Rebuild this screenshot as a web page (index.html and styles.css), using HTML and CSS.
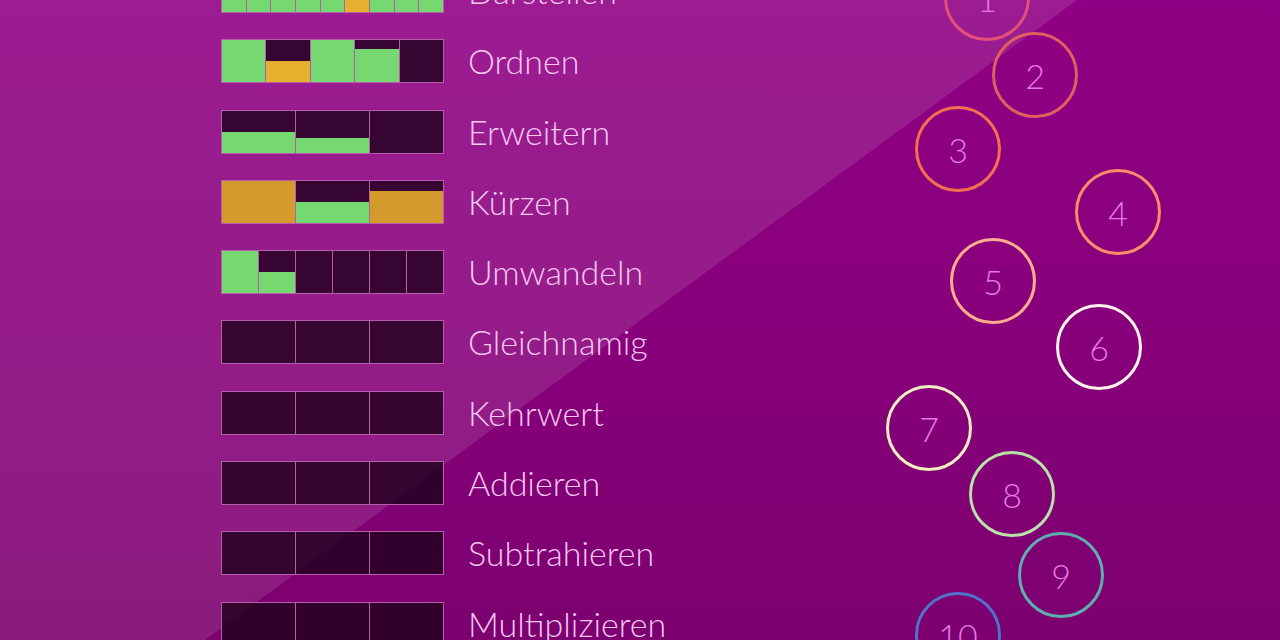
FILE: index.html
```html
<!DOCTYPE html>
<html lang="de">
<head>
  <meta charset="UTF-8" />
  <meta name="viewport" content="width=device-width, initial-scale=1.0"/>
  <title>Brüche</title>
  <link rel="stylesheet" href="styles.css">
</head>
<body>

  <main class="screen">

    <div class="glare"></div>

    <ul class="topics">
      <li class="topic">
        <div class="bar">
          <div class="seg"><div class="fill green" style="height:100%"></div></div>
          <div class="seg"><div class="fill green" style="height:100%"></div></div>
          <div class="seg"><div class="fill green" style="height:100%"></div></div>
          <div class="seg"><div class="fill green" style="height:100%"></div></div>
          <div class="seg"><div class="fill green" style="height:100%"></div></div>
          <div class="seg"><div class="fill gold" style="height:100%"></div></div>
          <div class="seg"><div class="fill green" style="height:100%"></div></div>
          <div class="seg"><div class="fill green" style="height:100%"></div></div>
          <div class="seg"><div class="fill green" style="height:100%"></div></div>
        </div>
        <span class="label">Darstellen</span>
      </li>

      <li class="topic">
        <div class="bar">
          <div class="seg"><div class="fill green" style="height:100%"></div></div>
          <div class="seg"><div class="fill gold" style="height:50%"></div></div>
          <div class="seg"><div class="fill green" style="height:100%"></div></div>
          <div class="seg"><div class="fill green" style="height:80%"></div></div>
          <div class="seg"></div>
        </div>
        <span class="label">Ordnen</span>
      </li>

      <li class="topic">
        <div class="bar">
          <div class="seg"><div class="fill green" style="height:50%"></div></div>
          <div class="seg"><div class="fill green" style="height:34%"></div></div>
          <div class="seg"></div>
        </div>
        <span class="label">Erweitern</span>
      </li>

      <li class="topic">
        <div class="bar">
          <div class="seg"><div class="fill ochre" style="height:100%"></div></div>
          <div class="seg"><div class="fill green" style="height:50%"></div></div>
          <div class="seg"><div class="fill ochre" style="height:76%"></div></div>
        </div>
        <span class="label">Kürzen</span>
      </li>

      <li class="topic">
        <div class="bar">
          <div class="seg"><div class="fill green" style="height:100%"></div></div>
          <div class="seg"><div class="fill green" style="height:50%"></div></div>
          <div class="seg"></div>
          <div class="seg"></div>
          <div class="seg"></div>
          <div class="seg"></div>
        </div>
        <span class="label">Umwandeln</span>
      </li>

      <li class="topic">
        <div class="bar">
          <div class="seg"></div>
          <div class="seg"></div>
          <div class="seg"></div>
        </div>
        <span class="label">Gleichnamig</span>
      </li>

      <li class="topic">
        <div class="bar">
          <div class="seg"></div>
          <div class="seg"></div>
          <div class="seg"></div>
        </div>
        <span class="label">Kehrwert</span>
      </li>

      <li class="topic">
        <div class="bar">
          <div class="seg"></div>
          <div class="seg"></div>
          <div class="seg"></div>
        </div>
        <span class="label">Addieren</span>
      </li>

      <li class="topic">
        <div class="bar">
          <div class="seg"></div>
          <div class="seg"></div>
          <div class="seg"></div>
        </div>
        <span class="label">Subtrahieren</span>
      </li>

      <li class="topic">
        <div class="bar">
          <div class="seg"></div>
          <div class="seg"></div>
          <div class="seg"></div>
        </div>
        <span class="label">Multiplizieren</span>
      </li>
    </ul>

    <!-- level rings, scattered like a path -->
    <div class="rings">
      <div class="ring ring-1">1</div>
      <div class="ring ring-2">2</div>
      <div class="ring ring-3">3</div>
      <div class="ring ring-4">4</div>
      <div class="ring ring-5">5</div>
      <div class="ring ring-6">6</div>
      <div class="ring ring-7">7</div>
      <div class="ring ring-8">8</div>
      <div class="ring ring-9">9</div>
      <div class="ring ring-10">10</div>
    </div>

  </main>

</body>
</html>
```

FILE: styles.css
```css
html, body {
  margin: 0;
  padding: 0;
  height: 100%;
  overflow: hidden;
}
body {
  font-family: Lato, "Open Sans", sans-serif;
  background: linear-gradient(180deg, #900084 0%, #860079 60%, #7c006f 100%);
}
.screen {
  position: relative;
  width: 1280px;
  height: 640px;
  overflow: hidden;
}

/* diagonal light band */
.glare {
  position: absolute;
  inset: 0;
  background: rgba(255, 255, 255, 0.11);
  clip-path: polygon(0 0, 1077px 0, 205px 640px, 0 640px);
  pointer-events: none;
}

/* topic list */
.topics {
  position: relative;
  list-style: none;
  margin: -31px 0 0 221px;
  padding: 0;
  display: flex;
  flex-direction: column;
  gap: 26.3px;
}
.topic {
  display: flex;
  align-items: center;
  gap: 24px;
  height: 44px;
}
.bar {
  display: flex;
  width: 223px;
  height: 44px;
  box-sizing: border-box;
  border: 1px solid #b65eab;
  background: rgba(30, 0, 26, 0.8);
}
.seg {
  flex: 1;
  display: flex;
  flex-direction: column;
  justify-content: flex-end;
  border-left: 1px solid #b65eab;
}
.seg:first-child {
  border-left: none;
}
.fill {
  width: 100%;
}
.green { background: #76d870; }
.gold { background: #e6b02e; }
.ochre { background: #d49a2e; }

.label {
  font-size: 34px;
  font-weight: 300;
  color: #f6c8f2;
  line-height: 1;
}

/* rings */
.rings {
  position: absolute;
  inset: 0;
}
.ring {
  position: absolute;
  width: 86px;
  height: 86px;
  box-sizing: border-box;
  border: 3px solid;
  border-radius: 50%;
  display: flex;
  align-items: center;
  justify-content: center;
  font-family: Lato, sans-serif;
  font-weight: 300;
  font-size: 34px;
  color: #e07ae6;
}
.ring-1 { left: 944px; top: -45px; border-color: #e4507a; }
.ring-2 { left: 992px; top: 32px; border-color: #e0605e; }
.ring-3 { left: 915px; top: 106px; border-color: #f27050; }
.ring-4 { left: 1075px; top: 169px; border-color: #fa8c6a; }
.ring-5 { left: 950px; top: 238px; border-color: #ffac8c; }
.ring-6 { left: 1056px; top: 304px; border-color: #fff4ec; }
.ring-7 { left: 886px; top: 385px; border-color: #eeeec0; }
.ring-8 { left: 969px; top: 451px; border-color: #b8e2a8; }
.ring-9 { left: 1018px; top: 532px; border-color: #5eaeb0; }
.ring-10 { left: 915px; top: 592px; border-color: #5272c8; }
```
